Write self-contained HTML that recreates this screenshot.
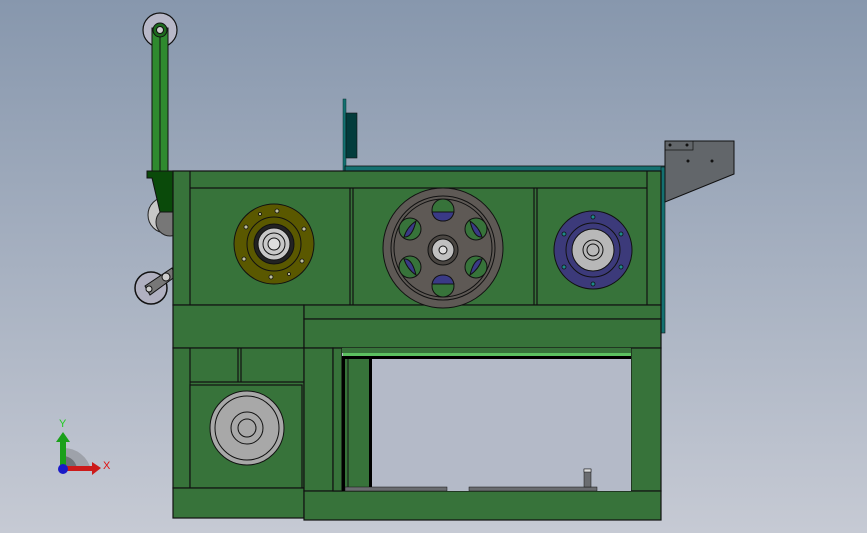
<!DOCTYPE html>
<html><head><meta charset="utf-8"><style>
html,body{margin:0;padding:0;width:867px;height:533px;overflow:hidden}
svg{display:block}
</style></head><body>
<svg width="867" height="533" viewBox="0 0 867 533" xmlns="http://www.w3.org/2000/svg" font-family="Liberation Sans, sans-serif">
<defs>
<linearGradient id="bg" x1="0" y1="0" x2="0" y2="1">
<stop offset="0" stop-color="#8797ad"/><stop offset="1" stop-color="#c6cad4"/>
</linearGradient>
</defs>
<rect width="867" height="533" fill="url(#bg)"/>

<!-- casters -->
<circle cx="166" cy="215" r="18" fill="#c8c8c8" stroke="#222"/>
<circle cx="170" cy="222" r="14" fill="#777" stroke="#222"/>
<circle cx="151" cy="288" r="16" fill="#b0b0c0" stroke="#111" stroke-width="1.5"/>
<polygon points="145,286 172,268 176,276 150,295" fill="#777" stroke="#111"/>
<circle cx="149" cy="289" r="3" fill="#ccc" stroke="#111"/>
<circle cx="166" cy="277" r="4" fill="#ccc" stroke="#111"/>

<!-- post -->
<circle cx="160" cy="30" r="17" fill="#b8b8c8" stroke="#111" stroke-width="1.2"/>
<rect x="152" y="28" width="16" height="144" fill="#2f8a2f" stroke="#111"/>
<line x1="160" y1="30" x2="160" y2="171" stroke="#111"/>
<circle cx="160" cy="30" r="7" fill="#1e6a1e" stroke="#111"/>
<circle cx="160" cy="30" r="3.5" fill="#ccc" stroke="#111"/>
<polygon points="147,171 173,171 173,212 160,212 152,178 147,178" fill="#0a4a0a" stroke="#111"/>

<!-- teal plate -->
<rect x="343" y="99" width="3" height="72" fill="#127070" stroke="#0a3030" stroke-width="0.5"/>
<rect x="346" y="113" width="11" height="45" fill="#033c3c" stroke="#111" stroke-width="0.6"/>
<rect x="345" y="166" width="320" height="5" fill="#137070" stroke="#111" stroke-width="0.8"/>
<rect x="661" y="167" width="4" height="166" fill="#137070" stroke="#111" stroke-width="0.6"/>

<!-- bracket -->
<polygon points="665,141 734,141 734,174 665,202" fill="#62666a" stroke="#111"/>
<rect x="665" y="141" width="28" height="9" fill="none" stroke="#111" stroke-width="0.7"/>
<circle cx="670" cy="145" r="1.5" fill="#111"/><circle cx="687" cy="145" r="1.5" fill="#111"/>
<circle cx="688" cy="161" r="1.5" fill="#111"/><circle cx="712" cy="161" r="1.5" fill="#111"/>

<g stroke="#111" stroke-width="1.2" fill="#37733a">
<!-- upper frame -->
<rect x="173" y="171" width="488" height="134"/>
<line x1="190" y1="188" x2="647" y2="188"/>
<line x1="190" y1="171" x2="190" y2="305"/>
<line x1="647" y1="171" x2="647" y2="305"/>
<line x1="350" y1="188" x2="350" y2="305"/><line x1="353" y1="188" x2="353" y2="305"/>
<line x1="534" y1="188" x2="534" y2="305"/><line x1="537" y1="188" x2="537" y2="305"/>
<!-- middle -->
<rect x="173" y="305" width="131" height="43"/>
<rect x="304" y="305" width="357" height="14"/>
<rect x="304" y="319" width="357" height="29"/>
<!-- lower left -->
<rect x="173" y="348" width="131" height="140"/>
<line x1="190" y1="348" x2="190" y2="488"/>
<line x1="238" y1="348" x2="238" y2="382"/><line x1="241" y1="348" x2="241" y2="382"/>
<line x1="190" y1="382" x2="304" y2="382"/>
<rect x="190" y="385" width="112" height="103"/>
<rect x="173" y="488" width="131" height="30"/>
<!-- lower right -->
<rect x="304" y="348" width="29" height="143"/>
<rect x="631" y="348" width="30" height="143"/>
<rect x="304" y="491" width="357" height="29"/>
<rect x="333" y="348" width="9" height="143"/>
</g>
<!-- opening -->
<rect x="342" y="348" width="289" height="143" fill="#b4bac8"/>
<rect x="342" y="348" width="289" height="5" fill="#37733a"/>
<rect x="343" y="353" width="288" height="3" fill="#5cc060"/>
<rect x="343" y="356" width="288" height="3" fill="#000"/>
<rect x="342" y="356" width="3" height="135" fill="#000"/>
<rect x="345" y="359" width="25" height="132" fill="#37733a"/>
<line x1="348" y1="359" x2="348" y2="491" stroke="#111"/>
<rect x="369" y="359" width="3" height="132" fill="#000"/>
<rect x="345" y="487" width="102" height="4" fill="#6a6c70" stroke="#111" stroke-width="0.5"/>
<rect x="469" y="487" width="128" height="4" fill="#6a6c70" stroke="#111" stroke-width="0.5"/>
<rect x="584" y="469" width="7" height="18" fill="#6a6c70" stroke="#111" stroke-width="0.5"/>
<rect x="584" y="469" width="7" height="3" fill="#ddd" stroke="#111" stroke-width="0.5"/>

<!-- yellow flange -->
<g stroke="#111">
<circle cx="274" cy="244" r="40" fill="#5a5800"/>
<circle cx="274" cy="244" r="27" fill="none"/>
<circle cx="274" cy="244" r="20" fill="#222"/>
<circle cx="274" cy="244" r="16" fill="#c8c8c8"/>
<circle cx="274" cy="244" r="11" fill="none"/>
<circle cx="274" cy="244" r="6" fill="#ddd"/>
<g fill="#c0c0a0" stroke-width="0.8">
<circle cx="277" cy="211" r="2"/><circle cx="304" cy="229" r="2"/><circle cx="302" cy="261" r="2"/>
<circle cx="271" cy="277" r="2"/><circle cx="244" cy="259" r="2"/><circle cx="246" cy="227" r="2"/>
<circle cx="260" cy="214" r="1.5"/><circle cx="289" cy="274" r="1.5"/>
</g>
</g>

<!-- gear -->
<g stroke="#111">
<circle cx="443" cy="248" r="60" fill="#5e5955"/>
<circle cx="443" cy="248" r="52" fill="none"/>
<circle cx="443" cy="248" r="49" fill="none"/>
<g fill="#37733a">
<circle cx="443" cy="210" r="11"/><circle cx="476" cy="229" r="11"/><circle cx="476" cy="267" r="11"/>
<circle cx="443" cy="286" r="11"/><circle cx="410" cy="267" r="11"/><circle cx="410" cy="229" r="11"/>
</g>
<g fill="#3a3a86">
<path d="M432 212 L454 212 Q452 221 443 221 Q434 221 432 212Z"/>
<path d="M432 284 L454 284 Q452 275 443 275 Q434 275 432 284Z"/>
<path d="M470 221 Q479 227 482 237 Q474 238 470 221Z"/>
<path d="M470 275 Q479 269 482 259 Q474 258 470 275Z"/>
<path d="M416 221 Q407 227 404 237 Q412 238 416 221Z"/>
<path d="M416 275 Q407 269 404 259 Q412 258 416 275Z"/>
</g>
<circle cx="443" cy="250" r="15" fill="#4a4642"/>
<circle cx="443" cy="250" r="11" fill="#c0c0c0"/>
<circle cx="443" cy="250" r="4" fill="#ddd"/>
</g>

<!-- blue flange -->
<g stroke="#111">
<circle cx="593" cy="250" r="39" fill="#3c3a7a"/>
<circle cx="593" cy="250" r="27" fill="none"/>
<circle cx="593" cy="250" r="21" fill="#b8b8b8"/>
<circle cx="593" cy="250" r="10" fill="none"/>
<circle cx="593" cy="250" r="6" fill="none"/>
<g fill="#1c8a8a" stroke-width="0.8">
<circle cx="593" cy="217" r="2"/><circle cx="621" cy="234" r="2"/><circle cx="621" cy="267" r="2"/>
<circle cx="593" cy="284" r="2"/><circle cx="564" cy="267" r="2"/><circle cx="564" cy="234" r="2"/>
</g>
</g>

<!-- lower pulley -->
<g stroke="#111">
<circle cx="247" cy="428" r="37" fill="#a8a8a8"/>
<circle cx="247" cy="428" r="32" fill="none"/>
<circle cx="247" cy="428" r="16" fill="none"/>
<circle cx="247" cy="428" r="9" fill="none"/>
</g>

<!-- triad -->
<path d="M63 448 A28 28 0 0 1 91 470 L63 470Z" fill="#9ea2aa"/>
<path d="M63 456 A14 14 0 0 1 77 470 L63 470Z" fill="#6e7278"/>
<rect x="60" y="440" width="6" height="30" fill="#1aa01a"/>
<polygon points="56,442 70,442 63,432" fill="#1aa01a"/>
<rect x="63" y="466" width="30" height="5" fill="#cc1a1a"/>
<polygon points="92,462 92,475 101,468" fill="#cc1a1a"/>
<circle cx="63" cy="469" r="5" fill="#1a1ac8"/>
<text x="59" y="427" font-size="11" fill="#22cc22">Y</text>
<text x="103" y="469" font-size="11" fill="#e01010">X</text>
</svg>
</body></html>
